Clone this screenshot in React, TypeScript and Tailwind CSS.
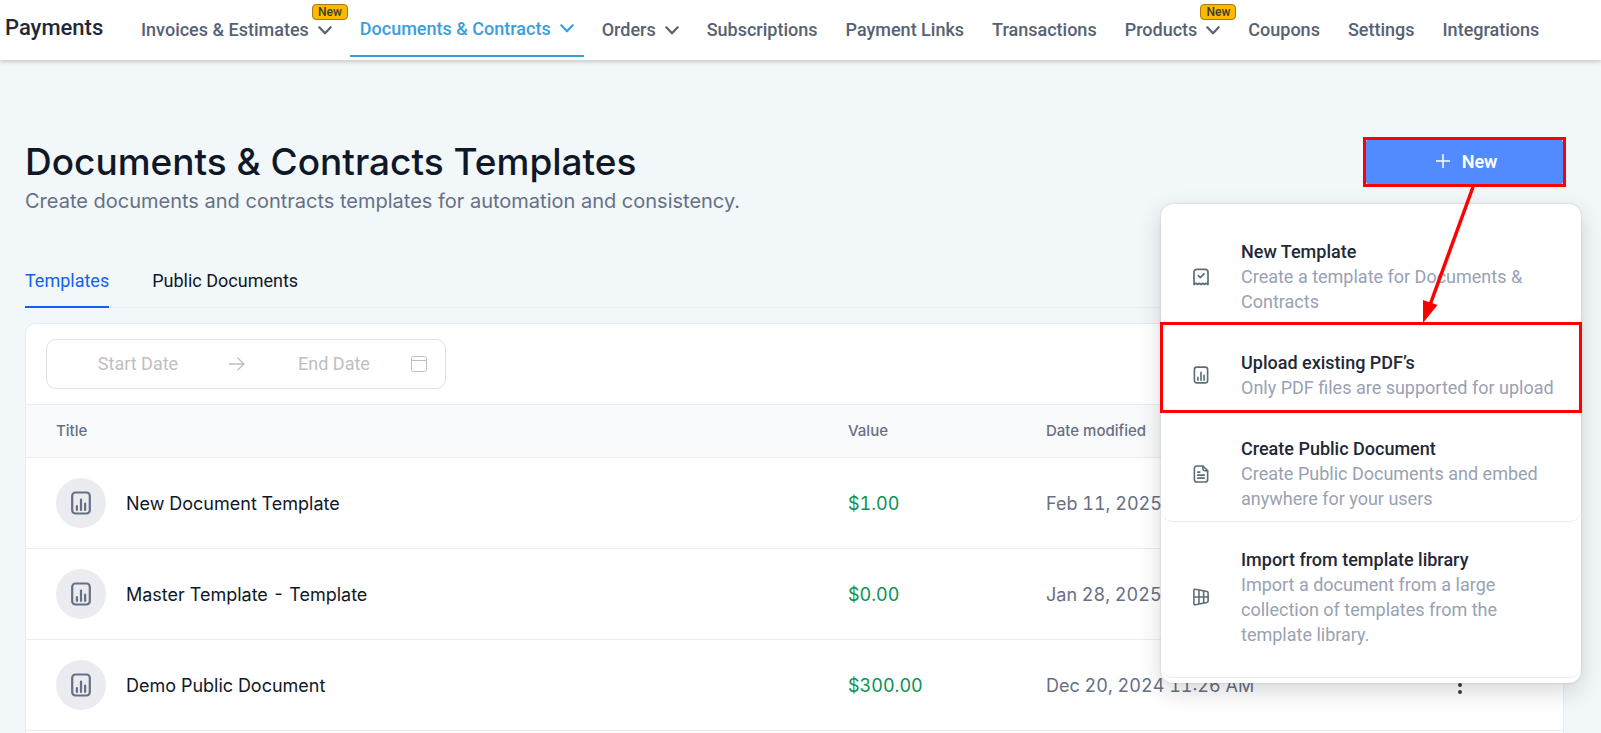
import { useState } from 'react'
import clsx from 'clsx'

type IconProps = { className?: string }

function Chevron({ className }: IconProps) {
  return (
    <svg viewBox="0 0 14 9" fill="none" stroke="currentColor" strokeWidth="2.2" strokeLinecap="round" strokeLinejoin="round" className={clsx('w-[14px] h-[9px] shrink-0', className)}>
      <path d="M1.3 1.3 7 7.2l5.7-5.9" />
    </svg>
  )
}

function ChartIcon({ className }: IconProps) {
  return (
    <svg viewBox="0 0 20 24" fill="none" stroke="currentColor" strokeWidth="2.2" strokeLinecap="round" className={className}>
      <rect x="1.2" y="1.5" width="17.6" height="21" rx="3.2" />
      <path d="M5.9 15v4M10 8.5V19M14.1 12.5V19" />
    </svg>
  )
}

function ReceiptIcon({ className }: IconProps) {
  return (
    <svg viewBox="0 0 16 18" fill="none" stroke="currentColor" strokeWidth="1.7" strokeLinecap="round" strokeLinejoin="round" className={className}>
      <path d="M1 16.5V4a2.6 2.6 0 0 1 2.6-2.6h8.8A2.6 2.6 0 0 1 15 4v12.5l-1.9-1.2-1.7 1.2-1.7-1.2L8 16.5l-1.7-1.2-1.7 1.2-1.7-1.2z" />
      <path d="m5.3 7.7 2 2 3.7-3.9" />
    </svg>
  )
}

function FileIcon({ className }: IconProps) {
  return (
    <svg viewBox="0 0 16 19" fill="none" stroke="currentColor" strokeWidth="1.7" strokeLinecap="round" strokeLinejoin="round" className={className}>
      <path d="M10 1H3.7A2.7 2.7 0 0 0 1 3.7v11.6A2.7 2.7 0 0 0 3.7 18h8.6a2.7 2.7 0 0 0 2.7-2.7V6z" />
      <path d="M10 1v3.3A1.7 1.7 0 0 0 11.700 6H15M4.500 7.500h2.300M4.500 10.700h7M4.500 13.900h7" />
    </svg>
  )
}

function GridIcon({ className }: IconProps) {
  return (
    <svg viewBox="0 0 18 20" fill="none" stroke="currentColor" strokeWidth="1.8" strokeLinejoin="round" className={className}>
      <path d="M2.6 1.2 15.8 3.9A1.5 1.5 0 0 1 17 5.400v9.200a1.500 1.500 0 0 1-1.200 1.500L2.600 18.800A1.300 1.300 0 0 1 1 17.500v-15a1.300 1.300 0 0 1 1.600-1.300z" />
      <path d="M6.7 2.2v15.600M12 3.300v13.400M1 10h16" />
    </svg>
  )
}

const NAV = [
  { label: 'Invoices & Estimates', menu: true, badge: true },
  { label: 'Documents & Contracts', menu: true, active: true },
  { label: 'Orders', menu: true },
  { label: 'Subscriptions' },
  { label: 'Payment Links' },
  { label: 'Transactions' },
  { label: 'Products', menu: true, badge: true },
  { label: 'Coupons' },
  { label: 'Settings' },
  { label: 'Integrations' },
]

const ACTIONS = [
  { icon: ReceiptIcon, title: 'New Template', text: 'Create a template for Documents & Contracts' },
  { icon: ChartIcon, title: 'Upload existing PDF’s', text: 'Only PDF files are supported for upload', marked: true },
  { icon: FileIcon, title: 'Create Public Document', text: 'Create Public Documents and embed anywhere for your users' },
  { icon: GridIcon, title: 'Import from template library', text: 'Import a document from a large collection of templates from the template library.', last: true },
]

const ROWS = [
  { title: 'New Document Template', value: '$1.00', date: 'Feb 11, 2025' },
  { title: 'Master Template - Template', value: '$0.00', date: 'Jan 28, 2025' },
  { title: 'Demo Public Document', value: '$300.00', date: 'Dec 20, 2024 11:26 AM' },
]

function TopNav() {
  return (
    <header className="relative z-10 flex h-[60px] shrink-0 bg-white pl-[5px] font-['Roboto',sans-serif] shadow-[0_2px_4px_rgba(0,0,0,0.18)]">
      <h2 className="w-[126px] shrink-0 pt-3 text-[22px] leading-8 font-medium text-[#1f2937]">Payments</h2>
      <nav className="flex items-start gap-2">
        {NAV.map((n) => (
          <a
            key={n.label}
            href="#"
            className={clsx(
              'relative flex items-center px-[10px] text-[18px] leading-6 font-medium whitespace-nowrap',
              n.active ? 'h-[57px] border-b-2 border-[#37a0dc] pt-[2px] text-[#37a0dc]' : 'h-[60px] text-[#566273]',
            )}
          >
            {n.label}
            {n.menu && <Chevron className="ml-[9px]" />}
            {n.badge && (
              <span className="absolute top-1 right-[-6px] h-4 rounded-sm border border-[#a87c10] bg-[#ffb800] px-[5px] text-[12px] leading-[14px] text-[#33402f]">New</span>
            )}
          </a>
        ))}
      </nav>
    </header>
  )
}

function NewMenu() {
  return (
    <div className="absolute top-[64px] right-[-18px] z-20 w-[420px] rounded-xl bg-white pt-[10px] pb-[5px] font-['Roboto',sans-serif] shadow-[0_0_2px_rgba(0,0,0,0.2),0_8px_24px_rgba(0,0,0,0.16)]">
      {ACTIONS.map((a) => (
        <button
          key={a.title}
          className={clsx(
            'relative flex w-full items-center rounded-xl border-b border-[#ececf0] pt-[25px] pr-6 pl-8 text-left text-[18px] leading-[25px]',
            a.last ? 'pb-[30px]' : 'pb-[10px]',
          )}
        >
          <a.icon className="mr-8 h-[18px] w-4 shrink-0 text-[#5b6f78]" />
          <span>
            <span className="block font-medium text-[#1f2937]">{a.title}</span>
            <span className="block text-[#98a2b3]">{a.text}</span>
          </span>
          {a.marked && <span className="pointer-events-none absolute -inset-x-px -top-[3px] -bottom-[3px] border-3 border-[#ff0000]" />}
        </button>
      ))}
    </div>
  )
}

function NewButton() {
  return (
    <div className="relative mt-[77px] h-[50px] w-[203px] shrink-0 border-3 border-[#ff0000]">
      <button className="flex h-full w-full items-center justify-center gap-3 rounded-xs bg-[#528bff] pb-0.5 pl-1 font-['Roboto',sans-serif] text-[18px] font-semibold text-white">
        <svg viewBox="0 0 14 14" className="h-[14px] w-[14px]" stroke="currentColor" strokeWidth="1.5">
          <path d="M7 0v14M0 7h14" />
        </svg>
        New
      </button>
      <NewMenu />
      <svg viewBox="0 0 60 140" className="pointer-events-none absolute top-[45px] left-[52px] z-30 h-[140px] w-[60px]">
        <path d="M55 2 12 120" stroke="#ff0000" strokeWidth="3.5" />
        <path d="M5 138V115l14.500 5z" fill="#ff0000" />
      </svg>
    </div>
  )
}

function DateRange() {
  const field = 'min-w-0 bg-transparent pb-0.5 text-center text-[18px] text-gray-700 outline-none placeholder:text-[#bfbfbf]'
  return (
    <div className="ml-5 flex h-[50px] w-[400px] items-center rounded-[10px] border border-[#e0e0e6] pl-3 font-['Roboto',sans-serif] text-[#bfbfbf]">
      <input aria-label="Start Date" placeholder="Start Date" className={clsx(field, 'w-[158px]')} />
      <svg viewBox="0 0 16 14" className="mx-3 h-[14px] w-4 shrink-0" fill="none" stroke="currentColor" strokeWidth="1.3">
        <path d="M0 7h15M8.500.8 15 7l-6.500 6.200" />
      </svg>
      <input aria-label="End Date" placeholder="End Date" className={clsx(field, 'w-[154px]')} />
      <svg viewBox="0 0 16 16" className="h-4 w-4 shrink-0" fill="none" stroke="currentColor" strokeWidth="1">
        <rect x=".5" y=".5" width="15" height="15" rx="2" />
        <path d="M.5 4.500h15" />
      </svg>
    </div>
  )
}

export default function App() {
  const [tab, setTab] = useState('Templates')

  return (
    <div className="flex h-screen flex-col overflow-hidden bg-[#f2f7fa] font-['Inter',sans-serif]">
      <TopNav />
      <main className="flex min-h-0 flex-1 flex-col pr-[35px] pl-[25px]">
        <div className="flex justify-between">
          <div className="pt-[78px]">
            <h1 className="text-[37px] leading-[48px] font-medium text-[#101828]">Documents &amp; Contracts Templates</h1>
            <p className="text-[20px] leading-[30px] text-[#667085]">Create documents and contracts templates for automation and consistency.</p>
          </div>
          <NewButton />
        </div>

        <div className="mt-[40px] mr-0.5 flex gap-[43px] border-b border-[#e9edf2] font-['Roboto',sans-serif]">
          {['Templates', 'Public Documents'].map((t) => (
            <button
              key={t}
              onClick={() => setTab(t)}
              className={clsx(
                '-mb-px h-[52px] border-b-2 pb-px text-[18px] leading-6',
                tab === t ? 'border-[#155eef] text-[#155eef]' : 'border-transparent text-[#101828]',
              )}
            >
              {t}
            </button>
          ))}
        </div>

        <section className="mt-[15px] mr-0.5 flex-1 rounded-t-[10px] border border-b-0 border-[#eaecf0] bg-white">
          <div className="pt-[15px] pb-[15px]">
            <DateRange />
          </div>
          <table className="w-full table-fixed text-left text-[18px]">
            <thead>
              <tr className="h-[53px] border-y border-[#eaecf0] bg-[#f9fafb] text-[15px] text-[#667085]">
                <th className="pl-[30px] font-medium">Title</th>
                <th className="w-[198px] pl-[30px] font-medium">Value</th>
                <th className="w-[402px] pl-[30px] font-medium">Date modified</th>
                <th className="w-[145px]" />
              </tr>
            </thead>
            <tbody>
              {ROWS.map((r) => (
                <tr key={r.title} className="h-[91px] border-b border-[#eaecf0] tabular-nums">
                  <td className="pl-[30px]">
                    <div className="flex items-center gap-5 text-[#101828]">
                      <span className="flex h-[50px] w-[50px] items-center justify-center rounded-full bg-[#eaecf0]">
                        <ChartIcon className="h-6 w-5 text-[#667085]" />
                      </span>
                      {r.title}
                    </div>
                  </td>
                  <td className="pl-[30px] text-[#099250]">{r.value}</td>
                  <td className="pl-[30px] text-[#667085]">{r.date}</td>
                  <td className="pl-[30px]">
                    <button aria-label={'Actions for ' + r.title} className="flex h-8 w-6 items-center justify-center text-[#344054]">
                      <svg viewBox="0 0 4 20" className="h-5 w-1" fill="currentColor">
                        <circle cx="2" cy="3" r="2" />
                        <circle cx="2" cy="10" r="2" />
                        <circle cx="2" cy="17" r="2" />
                      </svg>
                    </button>
                  </td>
                </tr>
              ))}
            </tbody>
          </table>
        </section>
      </main>
    </div>
  )
}
